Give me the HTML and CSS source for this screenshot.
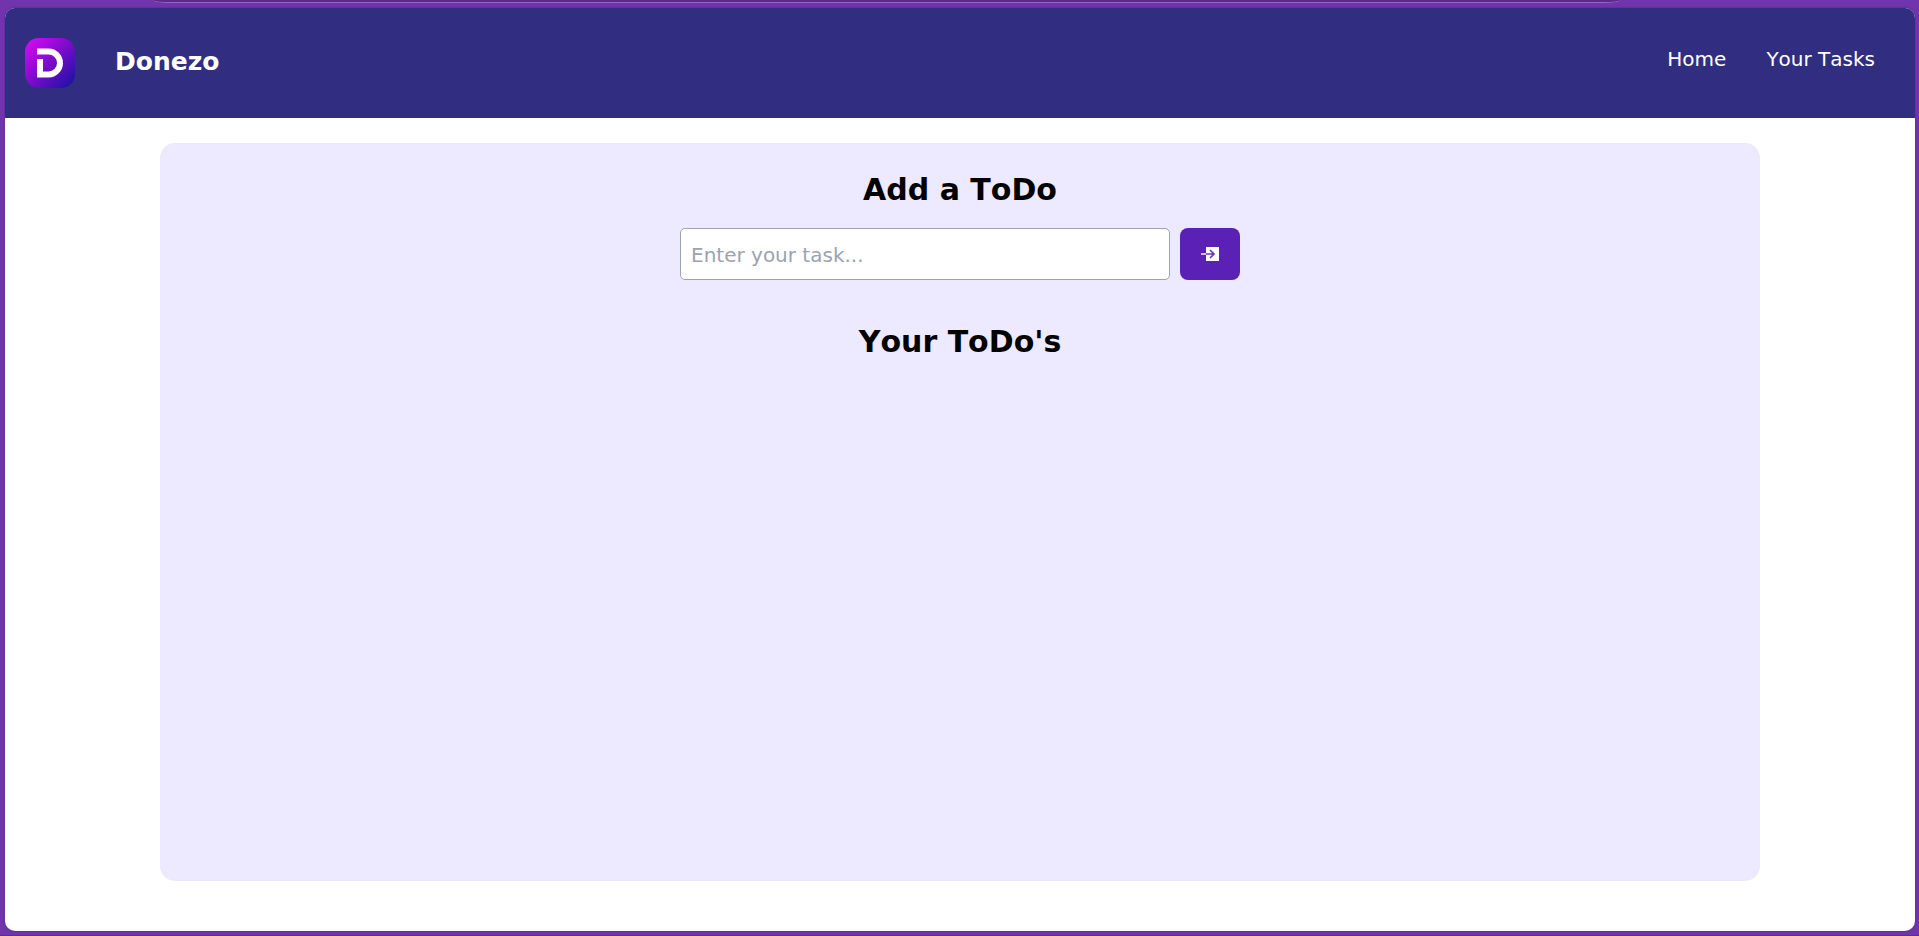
FILE: index.html
```html
<!DOCTYPE html>
<html lang="en">
<head>
  <meta charset="utf-8">
  <meta name="viewport" content="width=device-width, initial-scale=1">
  <title>Donezo</title>
  <link rel="stylesheet" href="styles.css">
</head>
<body>
  <div class="toolbar-edge"></div>
  <div class="window">
    <header class="header">
      <div class="brand">
        <svg class="logo" viewBox="0 0 50 50" aria-hidden="true">
          <defs>
            <linearGradient id="logo-fill" x1="0" y1="0" x2="1" y2="1">
              <stop offset="0.05" stop-color="#d50af2"/>
              <stop offset="0.5" stop-color="#7a0cca"/>
              <stop offset="0.95" stop-color="#1c12a4"/>
            </linearGradient>
          </defs>
          <rect width="50" height="50" rx="14" fill="url(#logo-fill)"/>
          <path d="M12 13.5H23.5A11.5 11.5 0 0 1 23.5 36.5H15V21" fill="none" stroke="#fff" stroke-width="6"/>
        </svg>
        <span class="brand-name">Donezo</span>
      </div>
      <nav class="nav">
        <a class="nav-link" href="#home">Home</a>
        <a class="nav-link" href="#tasks">Your Tasks</a>
      </nav>
    </header>
    <main class="panel">
      <h1 class="heading"><label for="task">Add a ToDo</label></h1>
      <form class="task-form">
        <input class="task-input" id="task" type="text" placeholder="Enter your task...">
        <button class="add-button" type="button" aria-label="Add task">
          <svg class="add-icon" viewBox="0 0 18 14" aria-hidden="true">
            <rect x="5" width="13" height="14" fill="#fff"/>
            <path d="M0 7H5" stroke="#cdb9ec" stroke-width="2"/>
            <path d="M5 7H13M9 3L13 7L9 11" fill="none" stroke="#6c35be" stroke-width="1.7"/>
          </svg>
        </button>
      </form>
      <h2 class="heading">Your ToDo's</h2>
    </main>
  </div>
</body>
</html>
```
FILE: styles.css
```css
* {
  box-sizing: border-box;
}

body {
  margin: 0;
  min-height: 100vh;
  display: flex;
  flex-direction: column;
  padding: 0 4px 4px 5px;
  background: #7034ac;
  border-bottom: 1px solid #4b4253;
  font-family: "DejaVu Sans", Verdana, sans-serif;
  font-size: 20px;
  font-kerning: none;
  color: #000;
}

.toolbar-edge {
  height: 3px;
  margin: 0 295px 5px 148px;
  background: #5b2b8c;
  border-bottom: 1px solid #9867bd;
  border-radius: 0 0 16px 16px / 0 0 3px 3px;
}

.window {
  flex: 1;
  display: flex;
  flex-direction: column;
  overflow: hidden;
  background: #fff;
  border-radius: 10px;
  box-shadow: 0 0 2px #4a2580;
}

.header {
  display: flex;
  justify-content: space-between;
  align-items: flex-start;
  padding: 30px 40px 30px 20px;
  background: #312e81;
}

.brand {
  display: flex;
  gap: 40px;
}

.logo {
  width: 50px;
  height: 50px;
}

.brand-name {
  font-size: 25px;
  font-weight: 700;
  line-height: 48px;
  color: #fff;
}

.nav {
  display: flex;
  gap: 40px;
}

.nav-link {
  line-height: 42px;
  color: #fff;
  text-decoration: none;
}

.panel {
  flex: 1;
  display: flex;
  flex-direction: column;
  align-items: center;
  width: 1600px;
  max-width: 90%;
  margin: 25px auto 50px;
  padding-top: 27px;
  background: #ede9fe;
  border-radius: 15px;
}

.heading {
  margin: 0;
  font-size: 30px;
  font-weight: 700;
  line-height: 40px;
}

.task-form {
  display: flex;
  gap: 10px;
  margin: 18px 0 42px;
}

.task-input {
  width: 490px;
  height: 52px;
  padding: 2px 10px 0;
  border: 1px solid #9ca3af;
  border-radius: 5px;
  background: #fff;
  font: inherit;
  font-kerning: none;
}

.task-input::placeholder {
  color: #9ca3af;
}

.add-button {
  display: grid;
  place-items: center;
  width: 60px;
  padding: 0;
  border: 0;
  border-radius: 8px;
  background: #5b21b6;
}

.add-icon {
  width: 18px;
  height: 14px;
}
```
